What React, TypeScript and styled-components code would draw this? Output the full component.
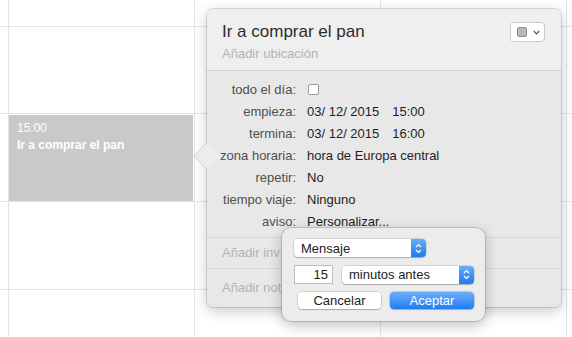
import React from "react";
import styled, { createGlobalStyle } from "styled-components";

const GlobalStyle = createGlobalStyle`
  html, body {
    margin: 0;
    padding: 0;
    background: #ffffff;
    font-family: "Liberation Sans", Arial, sans-serif;
    -webkit-font-smoothing: antialiased;
  }
  #root {
    width: 572px;
    height: 337px;
    overflow: hidden;
    position: relative;
  }
`;

const rows = [
  { label: "todo el día:", kind: "check" },
  { label: "empieza:", date: "03/ 12/ 2015", time: "15:00" },
  { label: "termina:", date: "03/ 12/ 2015", time: "16:00" },
  { label: "zona horaria:", value: "hora de Europa central" },
  { label: "repetir:", value: "No" },
  { label: "tiempo viaje:", value: "Ninguno" },
  { label: "aviso:", value: "Personalizar..." },
];

function App() {
  const cells = Array.from({ length: 25 });
  return (
    <>
      <GlobalStyle />
      <Calendar>
        {cells.map((_, i) => (
          <Cell key={i}>
            {i === 11 && (
              <Event>
                <EventTime>15:00</EventTime>
                <EventTitle>Ir a comprar el pan</EventTitle>
              </Event>
            )}
          </Cell>
        ))}
      </Calendar>

      <Popover>
        <Arrow />
        <Header>
          <TitleRow>
            <Title>Ir a comprar el pan</Title>
            <ColorButton>
              <Swatch />
              <svg width="7" height="5" viewBox="0 0 7 5">
                <path d="M0.8 1 L3.5 3.8 L6.2 1" fill="none" stroke="#555" strokeWidth="1.2" />
              </svg>
            </ColorButton>
          </TitleRow>
          <Placeholder>Añadir ubicación</Placeholder>
        </Header>

        <Details>
          {rows.map((r) => (
            <Row key={r.label}>
              <Label>{r.label}</Label>
              {r.kind === "check" ? (
                <Checkbox />
              ) : r.date ? (
                <Value>
                  {r.date}
                  <Time>{r.time}</Time>
                </Value>
              ) : (
                <Value>{r.value}</Value>
              )}
            </Row>
          ))}
        </Details>

        <Section $height={30}>
          <Placeholder>Añadir inv</Placeholder>
        </Section>
        <Section $height={37} $last>
          <Placeholder>Añadir not</Placeholder>
        </Section>
      </Popover>

      <AlertPopover>
        <PopupButton $width={132}>
          <PopupText>Mensaje</PopupText>
          <Stepper />
        </PopupButton>
        <AlertRow>
          <NumberField>15</NumberField>
          <PopupButton $width={132}>
            <PopupText>minutos antes</PopupText>
            <Stepper />
          </PopupButton>
        </AlertRow>
        <ButtonRow>
          <PushButton>Cancelar</PushButton>
          <PushButton $primary>Aceptar</PushButton>
        </ButtonRow>
      </AlertPopover>
    </>
  );
}

function Stepper() {
  return (
    <StepperBox>
      <svg width="7" height="11" viewBox="0 0 7 11">
        <path d="M1 4 L3.5 1.5 L6 4 M1 7 L3.5 9.5 L6 7" fill="none" stroke="#fff" strokeWidth="1.2" />
      </svg>
    </StepperBox>
  );
}

export default App;

const Calendar = styled.div`
  display: grid;
  grid-template-columns: 8px 185px 185px 185px 1fr;
  grid-template-rows: 26px 86px 87px 87px 1fr;
  gap: 1px;
  background: #e4e4e4;
  width: 572px;
  height: 337px;
`;

const Cell = styled.div`
  background: #ffffff;
  display: flex;
`;

const Event = styled.div`
  flex: 1;
  margin: 1px 1px 0 0;
  background: #c9c9c9;
  color: #ffffff;
  padding: 5px 8px;
  font-size: 12px;
  line-height: 16px;
`;

const EventTime = styled.div`
  font-weight: normal;
`;

const EventTitle = styled.div`
  font-weight: bold;
  margin-top: 1px;
`;

const Popover = styled.div`
  position: absolute;
  left: 207px;
  top: 9px;
  width: 354px;
  height: 298px;
  box-sizing: border-box;
  border-radius: 6px;
  background: #e8e8e8;
  box-shadow: 0 0 0 1px rgba(0, 0, 0, 0.12), 0 4px 14px rgba(0, 0, 0, 0.22);
  display: flex;
  flex-direction: column;
`;

const Arrow = styled.div`
  position: absolute;
  left: -9px;
  top: 138px;
  width: 18px;
  height: 18px;
  background: #ececec;
  transform: rotate(45deg);
  box-shadow: -1px 1px 0 rgba(0, 0, 0, 0.1);
`;

const Header = styled.div`
  position: relative;
  background: #efefef;
  border-radius: 6px 6px 0 0;
  border-bottom: 1px solid #d2d2d2;
  padding: 13px 16px 9px 15px;
  height: 62px;
  box-sizing: border-box;
`;

const TitleRow = styled.div`
  display: flex;
  justify-content: space-between;
  align-items: flex-start;
  margin-bottom: 4px;
`;

const Title = styled.div`
  font-size: 17px;
  line-height: 20px;
  color: #2b2b2b;
`;

const ColorButton = styled.div`
  width: 35px;
  height: 20px;
  box-sizing: border-box;
  background: #ffffff;
  border: 1px solid #cbcbcb;
  border-radius: 4px;
  display: flex;
  align-items: center;
  gap: 6px;
  padding-left: 6px;
`;

const Swatch = styled.div`
  width: 10px;
  height: 10px;
  box-sizing: border-box;
  background: #b9b9b9;
  border: 1px solid #8f8f8f;
  border-radius: 2px;
`;

const Placeholder = styled.div`
  font-size: 13px;
  line-height: 16px;
  color: #b3b3b3;
`;

const Details = styled.div`
  position: relative;
  padding: 7px 0 5px 0;
  border-bottom: 1px solid #d6d6d6;
`;

const Row = styled.div`
  display: flex;
  align-items: center;
  height: 22px;
  font-size: 13px;
`;

const Label = styled.div`
  width: 89px;
  text-align: right;
  color: #4f4f4f;
  margin-right: 11px;
`;

const Value = styled.div`
  color: #1e1e1e;
`;

const Time = styled.span`
  margin-left: 13px;
`;

const Checkbox = styled.div`
  width: 11px;
  height: 11px;
  box-sizing: border-box;
  background: #ffffff;
  border: 1px solid #9a9a9a;
  border-radius: 2px;
  margin-left: 1px;
`;

const Section = styled.div<{ $height: number; $last?: boolean }>`
  height: ${(p) => p.$height}px;
  display: flex;
  align-items: center;
  padding-left: 15px;
  border-bottom: ${(p) => (p.$last ? "none" : "1px solid #d6d6d6")};
`;

const AlertPopover = styled.div`
  position: absolute;
  left: 282px;
  top: 228px;
  width: 203px;
  height: 93px;
  box-sizing: border-box;
  background: #ececec;
  border-radius: 9px;
  box-shadow: 0 0 0 1px rgba(0, 0, 0, 0.14), 0 4px 14px rgba(0, 0, 0, 0.25);
  padding: 11px 11px 0 12px;
  display: flex;
  flex-direction: column;
  gap: 8px;
`;

const PopupButton = styled.div<{ $width: number }>`
  width: ${(p) => p.$width}px;
  height: 18px;
  box-sizing: border-box;
  background: #ffffff;
  border-radius: 4px;
  box-shadow: 0 0 0 0.5px rgba(0, 0, 0, 0.2), 0 1px 1px rgba(0, 0, 0, 0.2);
  display: flex;
  align-items: center;
  justify-content: space-between;
  overflow: hidden;
`;

const PopupText = styled.span`
  font-size: 13px;
  color: #222222;
  padding-left: 7px;
`;

const StepperBox = styled.div`
  width: 15px;
  height: 100%;
  background: linear-gradient(#68acf8, #1c7cf2);
  display: flex;
  align-items: center;
  justify-content: center;
`;

const AlertRow = styled.div`
  display: flex;
  align-items: center;
  gap: 9px;
`;

const NumberField = styled.div`
  width: 39px;
  height: 19px;
  box-sizing: border-box;
  background: #ffffff;
  border: 1px solid #bdbdbd;
  font-size: 13px;
  color: #222222;
  text-align: right;
  padding-right: 4px;
  line-height: 17px;
`;

const ButtonRow = styled.div`
  display: flex;
  gap: 9px;
  margin-left: 4px;
`;

const PushButton = styled.div<{ $primary?: boolean }>`
  width: ${(p) => (p.$primary ? 84 : 83)}px;
  height: 17px;
  box-sizing: border-box;
  border-radius: 4px;
  font-size: 13px;
  line-height: 17px;
  text-align: center;
  color: ${(p) => (p.$primary ? "#ffffff" : "#222222")};
  background: ${(p) => (p.$primary ? "linear-gradient(#6cb0fa, #1f7df3)" : "#ffffff")};
  box-shadow: ${(p) =>
    p.$primary
      ? "0 0 0 0.5px rgba(0, 60, 160, 0.4), 0 1px 1px rgba(0, 0, 0, 0.15)"
      : "0 0 0 0.5px rgba(0, 0, 0, 0.2), 0 1px 1px rgba(0, 0, 0, 0.2)"};
`;
